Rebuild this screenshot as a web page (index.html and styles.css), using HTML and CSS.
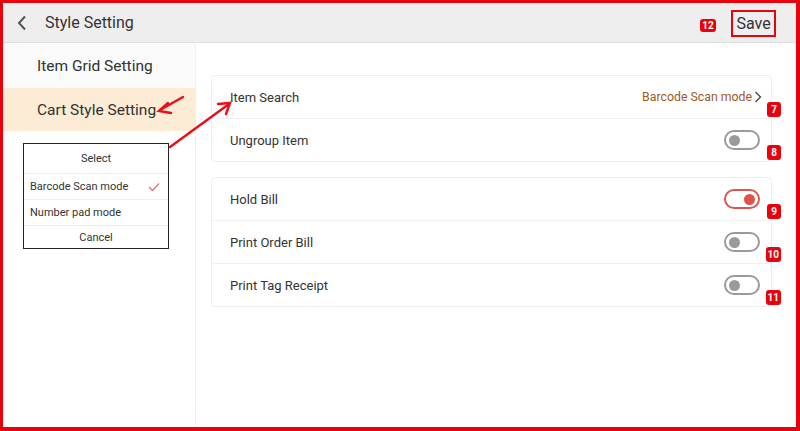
FILE: index.html
```html
<!DOCTYPE html>
<html>
<head>
    <title>Style Setting</title>
    <link rel="stylesheet" href="styles.css">
</head>
<body>
    <section class="frame">
        <header class="topbar">
            <span class="back">
                <svg width="12" height="16" viewBox="0 0 12 16"><path d="M9 1.5 L3 8 L9 14.5" fill="none" stroke="#555" stroke-width="2"/></svg>
            </span>
            <h1 class="title">Style Setting</h1>
            <span class="tag tag-save">12</span>
            <button class="save">Save</button>
        </header>
        <section class="body">
            <nav class="sidebar">
                <div class="side-item">Item Grid Setting</div>
                <div class="side-item active">Cart Style Setting</div>
                <div class="picker">
                    <div class="picker-head">Select</div>
                    <div class="picker-row">Barcode Scan mode
                        <svg width="12" height="10" viewBox="0 0 12 10"><path d="M1 5 L4.5 8.5 L11 1.5" fill="none" stroke="#e57373" stroke-width="1.3"/></svg>
                    </div>
                    <div class="picker-row">Number pad mode</div>
                    <div class="picker-cancel">Cancel</div>
                </div>
            </nav>
            <main class="content">
                <section class="card">
                    <div class="row">
                        <span class="label">Item Search</span>
                        <span class="value">Barcode Scan mode
                            <svg width="8" height="12" viewBox="0 0 8 12"><path d="M1.5 1 L6.5 6 L1.5 11" fill="none" stroke="#444" stroke-width="1.3"/></svg>
                        </span>
                        <span class="tag tag-row">7</span>
                    </div>
                    <div class="row">
                        <span class="label">Ungroup Item</span>
                        <span class="switch"></span>
                        <span class="tag tag-row">8</span>
                    </div>
                </section>
                <section class="card">
                    <div class="row">
                        <span class="label">Hold Bill</span>
                        <span class="switch on"></span>
                        <span class="tag tag-row">9</span>
                    </div>
                    <div class="row">
                        <span class="label">Print Order Bill</span>
                        <span class="switch"></span>
                        <span class="tag tag-row">10</span>
                    </div>
                    <div class="row">
                        <span class="label">Print Tag Receipt</span>
                        <span class="switch"></span>
                        <span class="tag tag-row">11</span>
                    </div>
                </section>
            </main>
        </section>
        <svg class="arrows" width="800" height="431" viewBox="0 0 800 431">
            <g fill="none" stroke="#e8111a" stroke-width="2.5" stroke-linecap="round">
                <path d="M183 97 L160 110"/>
                <path d="M168 103 L159 111 L171 113"/>
                <path d="M170 147 L229 104"/>
                <path d="M218 104 L230 103 L226 114"/>
            </g>
        </svg>
    </section>
</body>
</html>
```

FILE: styles.css
```css
body {
    margin: 0;
    font-family: Roboto, "Liberation Sans", sans-serif;
    color: #333;
}
.frame {
    position: relative;
    width: 793px;
    height: 424px;
    border-style: solid;
    border-color: #e8020b;
    border-width: 3px 4px 4px 3px;
    background-color: #fff;
    overflow: hidden;
}
.topbar {
    height: 40px;
    display: flex;
    align-items: center;
    background-color: #eeeeee;
    border-bottom: 1px solid #dedede;
    box-sizing: border-box;
}
.back {
    width: 12px;
    margin-left: 13px;
    display: flex;
}
.title {
    margin: 0 0 0 17px;
    font-size: 16px;
    font-weight: normal;
    color: #333;
    flex: 1;
}
.save {
    margin: 1px 20px 0 15px;
    width: 45px;
    height: 27px;
    padding: 0;
    border: 2px solid #e8020b;
    background: transparent;
    font-family: Roboto, "Liberation Sans", sans-serif;
    font-size: 16px;
    color: #333;
}
.tag {
    display: inline-flex;
    align-items: center;
    justify-content: center;
    background-color: #e8020b;
    color: #fff;
    font-size: 10px;
    font-weight: bold;
    border-radius: 3px;
    height: 15px;
    min-width: 14px;
    padding: 0 2px;
    box-sizing: border-box;
}
.tag-save {
    margin-top: 6px;
    min-width: 16px;
    height: 13px;
}
.body {
    display: flex;
    height: 384px;
}
.sidebar {
    width: 192px;
    border-right: 1px solid #f0f0f0;
    background-color: #fff;
}
.side-item {
    height: 45px;
    display: flex;
    align-items: center;
    padding-left: 34px;
    font-size: 15.5px;
    color: #333;
    background-color: #fafafa;
}
.side-item.active {
    height: 43px;
    background-color: #fcecd6;
}
.picker {
    margin: 12px 0 0 20px;
    width: 146px;
    border: 1.5px solid #222;
    background-color: #fff;
    font-size: 11px;
    color: #333;
    box-sizing: border-box;
}
.picker-head,
.picker-cancel {
    text-align: center;
}
.picker-head {
    height: 29px;
    line-height: 30px;
    border-bottom: 1px solid #eee;
}
.picker-row {
    height: 25px;
    display: flex;
    align-items: center;
    justify-content: space-between;
    padding: 0 8px 0 6px;
    border-bottom: 1px solid #eee;
}
.picker-cancel {
    height: 22px;
    line-height: 24px;
}
.content {
    flex: 1;
    padding: 32px 24px 0 15px;
}
.card {
    border: 1px solid #eeeeee;
    border-radius: 4px;
    margin-bottom: 15px;
}
.row {
    position: relative;
    height: 43px;
    display: flex;
    align-items: center;
    justify-content: space-between;
    padding: 0 11px 0 18px;
    border-bottom: 1px solid #f0f0f0;
    font-size: 13px;
    box-sizing: border-box;
}
.row:last-child {
    border-bottom: none;
    height: 42px;
}
.value {
    color: #9c5a24;
    font-size: 12.3px;
    display: flex;
    align-items: center;
    gap: 2px;
    margin-right: -2px;
}
.switch {
    position: relative;
    width: 36px;
    height: 20px;
    border: 2px solid #9a9a9a;
    border-radius: 11px;
    box-sizing: border-box;
}
.switch::after {
    content: "";
    position: absolute;
    left: 3px;
    top: 2.5px;
    width: 11px;
    height: 11px;
    border-radius: 50%;
    background-color: #9a9a9a;
}
.switch.on {
    border-color: #d9574f;
}
.switch.on::after {
    left: auto;
    right: 3px;
    background-color: #e0524a;
}
.tag-row {
    position: absolute;
    right: -10px;
    bottom: 1px;
}
.arrows {
    position: absolute;
    left: -3px;
    top: -3px;
    pointer-events: none;
}
```
